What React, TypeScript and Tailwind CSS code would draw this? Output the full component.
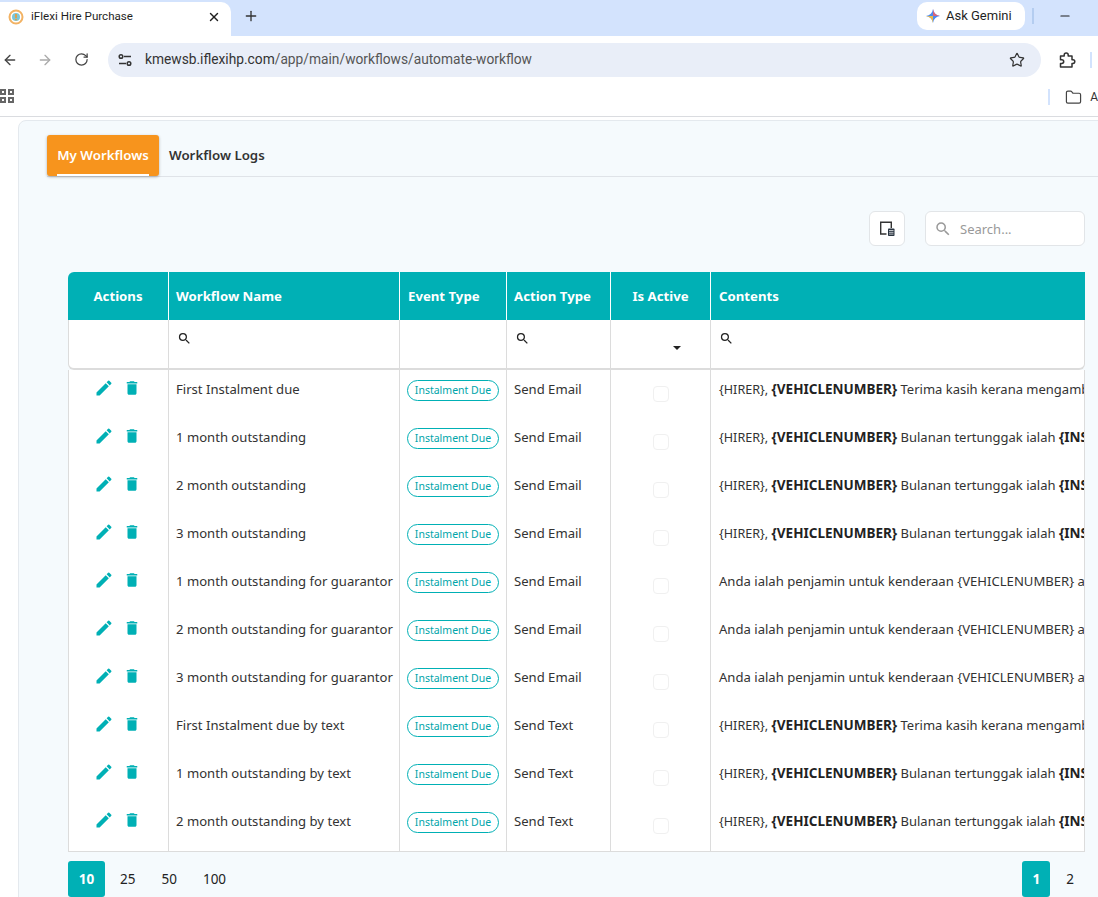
import { ArrowLeft, ArrowRight, Folder, Plus, RotateCw, Star, X, Minus } from "lucide-react";
import { MdDelete, MdEdit, MdSearch } from "react-icons/md";

type Row = { name: string; action: string; contents: "terima" | "bulanan" | "anda" };

const rows: Row[] = [
    { name: "First Instalment due", action: "Send Email", contents: "terima" },
    { name: "1 month outstanding", action: "Send Email", contents: "bulanan" },
    { name: "2 month outstanding", action: "Send Email", contents: "bulanan" },
    { name: "3 month outstanding", action: "Send Email", contents: "bulanan" },
    { name: "1 month outstanding for guarantor", action: "Send Email", contents: "anda" },
    { name: "2 month outstanding for guarantor", action: "Send Email", contents: "anda" },
    { name: "3 month outstanding for guarantor", action: "Send Email", contents: "anda" },
    { name: "First Instalment due by text", action: "Send Text", contents: "terima" },
    { name: "1 month outstanding by text", action: "Send Text", contents: "bulanan" },
    { name: "2 month outstanding by text", action: "Send Text", contents: "bulanan" },
];

function Contents({ kind }: { kind: Row["contents"] }) {
    if (kind === "anda") {
        return <span>Anda ialah penjamin untuk kenderaan {"{VEHICLENUMBER}"} atas nama {"{HIRER}"}</span>;
    }
    return (
        <span className="text-[13px]">
            <span className="text-[12.6px]">{"{HIRER}"}, </span>
            <b className="text-[13.5px] leading-none font-bold text-[#222]">{"{VEHICLENUMBER}"}</b>{" "}
            {kind === "terima" ? (
                "Terima kasih kerana mengambil kenderaan"
            ) : (
                <>
                    Bulanan tertunggak ialah <b className="text-[13.5px] leading-none font-bold text-[#222]">{"{INSTALMENT}"}</b>
                </>
            )}
        </span>
    );
}

function BrowserChrome() {
    return (
        <div className="font-['Noto_Sans',sans-serif] text-[#1f1f1f]">
            <div className="flex h-9 items-end bg-[#d3e3fd] pr-[26px]">
                <div className="flex h-[34px] w-[231px] items-center rounded-tr-[10px] bg-white pb-[4px] pl-2 pr-[10px]">
                    <svg width="16" height="16" viewBox="0 0 16 16" className="shrink-0">
                        <circle cx="8" cy="8" r="6.5" fill="#fff" stroke="#f2b263" strokeWidth="2" />
                        <circle cx="8" cy="8" r="4" fill="#7cc6d8" />
                        <rect x="7.2" y="5" width="1.6" height="4" fill="#f39a2b" />
                        <circle cx="8" cy="10.6" r="0.9" fill="#f39a2b" />
                    </svg>
                    <span className="ml-[7px] flex-1 font-['Roboto',sans-serif] text-[11.6px]">iFlexi Hire Purchase</span>
                    <X size={14} strokeWidth={2.4} />
                </div>
                <Plus size={16} strokeWidth={2} className="mb-[12px] ml-[12px] text-[#333]" />
                <div className="mb-[6px] ml-auto flex items-center">
                    <div className="flex h-7 w-[108px] items-center rounded-[10px] bg-white pl-[9px]">
                        <svg width="14" height="14" viewBox="0 0 14 14">
                            <path d="M7 0C7.6 4 10 6.4 14 7 10 7.6 7.6 10 7 14 6.4 10 4 7.6 0 7 4 6.4 6.4 4 7 0Z" fill="#4a8af0" />
                            <path d="M7 0C7.6 4 10 6.4 14 7H7Z" fill="#d9657a" />
                            <path d="M0 7C4 7.6 6.4 10 7 14V7Z" fill="#e9b949" />
                        </svg>
                        <span className="ml-[6px] font-['Roboto',sans-serif] text-[13px]">Ask Gemini</span>
                    </div>
                    <div className="ml-[7px] h-4 w-[2px] bg-[#b4cdf0]" />
                    <Minus size={14} className="ml-[24px]" />
                </div>
            </div>
            <div className="flex h-[47px] items-center bg-white text-[#444]">
                <ArrowLeft size={16} strokeWidth={2} className="ml-[2px] shrink-0" />
                <ArrowRight size={16} strokeWidth={2} className="ml-[19px] shrink-0 text-[#aaa]" />
                <RotateCw size={15} strokeWidth={2} className="ml-[21px] shrink-0" />
                <div className="ml-[19px] flex h-[34px] w-[933px] shrink-0 items-center rounded-full bg-[#e9eef8] pl-[9px] pr-4">
                    <svg width="16" height="16" viewBox="0 0 16 16" fill="none" stroke="#333" strokeWidth="1.5">
                        <path d="M7 4.5h7M2 11.5h7" />
                        <circle cx="4" cy="4.5" r="1.8" />
                        <circle cx="12" cy="11.5" r="1.8" />
                    </svg>
                    <span className="ml-[12px] font-['Roboto',sans-serif] text-[13.75px] text-[#333]">
                        kmewsb.iflexihp.com<span className="text-[#555]">/app/main/workflows/automate-workflow</span>
                    </span>
                    <Star size={16} strokeWidth={1.8} className="ml-auto text-[#333]" />
                </div>
                <svg width="18" height="18" viewBox="0 0 18 18" fill="none" stroke="#333" strokeWidth="1.5" strokeLinejoin="round" className="ml-[17px] shrink-0">
                    <path d="M2.5 5H6.2V4a2 2 0 0 1 4 0v1H14v3.8h1a1.8 1.8 0 0 1 0 3.6h-1V16H2.5v-3.5h1.3a1.9 1.9 0 0 0 0-3.8H2.5Z" />
                </svg>
                <div className="ml-[14px] h-4 w-[2px] shrink-0 bg-[#d3e3fd]" />
            </div>
            <div className="flex h-[34px] items-center border-b border-[#dadce0] bg-white">
                <div className="-mt-[8px] grid grid-cols-2 gap-[2px]">
                    <div className="h-[6px] w-[6px] border-2 border-[#666]" />
                    <div className="h-[6px] w-[6px] border-2 border-[#666]" />
                    <div className="h-[6px] w-[6px] border-2 border-[#666]" />
                    <div className="h-[6px] w-[6px] border-2 border-[#666]" />
                </div>
                <div className="mb-[5px] ml-auto flex items-center">
                    <div className="h-4 w-[2px] bg-[#d3e3fd]" />
                    <Folder size={17} strokeWidth={1.7} className="ml-[15px] text-[#444]" />
                    <span className="ml-[8px] font-['Roboto',sans-serif] text-xs text-[#333]">A</span>
                </div>
            </div>
        </div>
    );
}

export default function App() {
    return (
        <div className="h-[897px] w-[1098px] overflow-hidden bg-white font-['Noto_Sans',sans-serif] text-[#333]">
            <BrowserChrome />
            <div className="ml-[18px] mt-[3px] h-[800px] w-[1200px] rounded-tl-lg border border-[#e4e9ee] bg-[#f5fafd] pl-[28px] pt-[14px]">
                {/* tabs */}
                <div className="flex h-[42px] items-start border-b border-[#dfe3e8]">
                    <div className="relative flex h-[41px] w-[112px] items-center justify-center rounded-[3px] bg-[#f7941d] text-[13.3px] font-semibold text-white shadow-[0_1px_3px_rgba(0,0,0,0.3)]">
                        My Workflows
                        <div className="absolute bottom-0 left-[10px] h-[2px] w-[92px] bg-white" />
                    </div>
                    <div className="ml-[10px] flex h-[41px] items-center text-[13.3px] font-semibold text-[#333]">Workflow Logs</div>
                </div>

                {/* toolbar */}
                <div className="ml-[21px] mt-[34px] flex w-[1017px] justify-end gap-5">
                    <button className="flex h-[35px] w-9 items-center justify-center rounded-md border border-[#e2e5e8] bg-white">
                        <svg width="16" height="17" viewBox="0 0 16 17" fill="none">
                            <path d="M7.5 14H1.7V2.2h10.6V8" stroke="#333" strokeWidth="1.4" />
                            <rect x="9" y="8.5" width="6.5" height="7.5" rx="0.8" fill="#27323f" />
                            <path d="M10 10.5h4.5M10 12.3h4.5M10 14.1h4.5" stroke="#fff" strokeWidth="0.7" />
                        </svg>
                    </button>
                    <div className="flex h-[35px] w-40 items-center rounded-md border border-[#e2e5e8] bg-white pl-[8px]">
                        <MdSearch size={18} className="text-[#999]" />
                        <span className="ml-[8px] pt-[2px] text-[13px] text-[#999]">Search...</span>
                    </div>
                </div>

                {/* table */}
                <table className="ml-[21px] mt-[26px] w-[1017px] table-fixed border-separate border-spacing-0 text-[13.1px]">
                    <colgroup>
                        <col className="w-[101px]" />
                        <col className="w-[231px]" />
                        <col className="w-[107px]" />
                        <col className="w-[104px]" />
                        <col className="w-[100px]" />
                        <col />
                    </colgroup>
                    <thead>
                        <tr className="h-12 bg-[#00b0b5] text-[13.2px] font-bold text-white">
                            <th className="rounded-tl-md border-r border-white pt-[2px] text-center font-bold">Actions</th>
                            <th className="border-r border-white pl-[7px] pt-[2px] text-left font-bold">Workflow Name</th>
                            <th className="border-r border-white pl-2 pt-[2px] text-left font-bold">Event Type</th>
                            <th className="border-r border-white pl-[7px] pt-[2px] text-left font-bold">Action Type</th>
                            <th className="border-r border-white pt-[2px] text-center font-bold">Is Active</th>
                            <th className="pl-2 pt-[2px] text-left font-bold">Contents</th>
                        </tr>
                        <tr className="h-[50px] bg-white">
                            <td className="rounded-bl-md border-b-2 border-l border-r border-[#dcdcdc]" />
                            <td className="border-b-2 border-r border-[#dcdcdc] pb-[11px] pl-[8px]">
                                <MdSearch size={15} className="text-[#222]" />
                            </td>
                            <td className="border-b-2 border-r border-[#dcdcdc]" />
                            <td className="border-b-2 border-r border-[#dcdcdc] pb-[11px] pl-[8px]">
                                <MdSearch size={15} className="text-[#222]" />
                            </td>
                            <td className="border-b-2 border-r border-[#dcdcdc]">
                                <div className="ml-[62px] mt-2 h-0 w-0 border-x-[4px] border-t-[4px] border-x-transparent border-t-[#222]" />
                            </td>
                            <td className="rounded-br-md border-b-2 border-r border-[#dcdcdc] pb-[11px] pl-[8px]">
                                <MdSearch size={15} className="text-[#222]" />
                            </td>
                        </tr>
                    </thead>
                    <tbody>
                        {rows.map((row, i) => {
                            const last = i === rows.length - 1;
                            const border = last ? "border-b border-[#dcdcdc]" : "";
                            return (
                                <tr key={row.name} className={`bg-white align-top ${last ? "h-[50px]" : "h-12"}`}>
                                    <td className={`border-l border-r border-[#dcdcdc] pt-[8px] ${border}`}>
                                        <div className="flex items-center justify-center gap-[9px] pr-[3px] text-[#00b0b5]">
                                            <MdEdit size={20} />
                                            <MdDelete size={18} />
                                        </div>
                                    </td>
                                    <td className={`truncate border-r border-[#dcdcdc] pl-[7px] pt-[10px] ${border}`}>{row.name}</td>
                                    <td className={`border-r border-[#dcdcdc] pl-[7px] pt-[10px] ${border}`}>
                                        <span className="flex h-[21px] w-[92px] items-center justify-center rounded-full border border-[#00b0b5] text-[10.5px] text-[#00a5aa]">
                                            Instalment Due
                                        </span>
                                    </td>
                                    <td className={`border-r border-[#dcdcdc] pl-[7px] pt-[10px] ${border}`}>{row.action}</td>
                                    <td className={`border-r border-[#dcdcdc] pt-[16px] ${border}`}>
                                        <div className="mx-auto h-4 w-4 rounded-sm border border-[#f0f0f0] bg-white" />
                                    </td>
                                    <td className={`overflow-hidden whitespace-nowrap border-r border-[#dcdcdc] pl-2 pt-[10px] ${border}`}>
                                        <Contents kind={row.contents} />
                                    </td>
                                </tr>
                            );
                        })}
                    </tbody>
                </table>

                {/* pagination */}
                <div className="ml-[21px] mt-[9px] flex w-[1017px] items-start text-[13.5px] text-[#222]">
                    <div className="flex h-9 w-[37px] items-center justify-center rounded-[3px] bg-[#00b0b5] font-bold text-white">10</div>
                    <div className="ml-[15px] flex h-9 items-center">25</div>
                    <div className="ml-[26px] flex h-9 items-center">50</div>
                    <div className="ml-[26px] flex h-9 items-center">100</div>
                    <div className="ml-auto flex h-9 w-7 items-center justify-center rounded-[3px] bg-[#00b0b5] font-bold text-white">1</div>
                    <div className="ml-[16px] mr-[11px] flex h-9 items-center">2</div>
                </div>
            </div>
        </div>
    );
}
